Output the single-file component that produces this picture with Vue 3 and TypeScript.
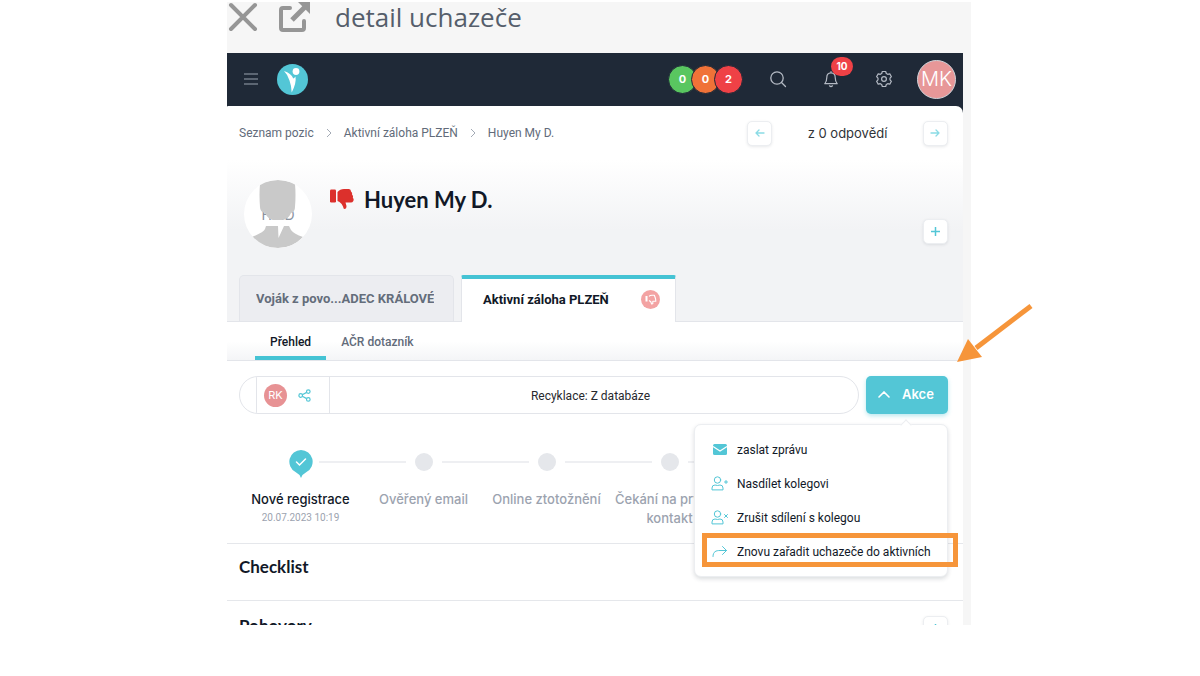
<script setup lang="ts">
interface Counter { value: number; tone: string }
interface Step { label: string; date?: string; done?: boolean }
interface MenuItem { label: string; icon: 'mail' | 'user-plus' | 'user-x' | 'forward'; marked?: boolean }

const counters: Counter[] = [
  { value: 0, tone: 'green' },
  { value: 0, tone: 'orange' },
  { value: 2, tone: 'red' },
]

const crumbs: string[] = ['Seznam pozic', 'Aktivní záloha PLZEŇ', 'Huyen My D.']

const steps: Step[] = [
  { label: 'Nové registrace', date: '20.07.2023 10:19', done: true },
  { label: 'Ověřený email' },
  { label: 'Online ztotožnění' },
  { label: 'Čekání na prvotní kontakt' },
]

const menu: MenuItem[] = [
  { label: 'zaslat zprávu', icon: 'mail' },
  { label: 'Nasdílet kolegovi', icon: 'user-plus' },
  { label: 'Zrušit sdílení s kolegou', icon: 'user-x' },
  { label: 'Znovu zařadit uchazeče do aktivních', icon: 'forward', marked: true },
]
</script>

<template>
  <div class="page">
    <div class="stage">
      <div class="viewer">
        <header class="titlebar">
          <button class="plain" aria-label="Zavřít">
            <svg width="32" height="32" viewBox="0 0 32 32" fill="none" stroke="#969696" stroke-width="4" stroke-linecap="round"><path d="M4 4 28 28M28 4 4 28" /></svg>
          </button>
          <button class="plain" aria-label="Otevřít v novém okně">
            <svg width="34" height="32" viewBox="0 0 34 32" fill="none" stroke="#969696" stroke-width="4"><path d="M13 7H6Q4 7 4 9V27Q4 29 6 29H25Q27 29 27 27V20" stroke-linecap="round" /><path d="M15 19 29 5" stroke-width="5" /><path d="M21 1H33V13Z" fill="#969696" stroke="none" /></svg>
          </button>
          <span class="title">detail uchazeče</span>
        </header>

        <div class="panel">
          <nav class="navbar">
            <button class="plain burger" aria-label="Menu">
              <svg width="14" height="12" viewBox="0 0 14 12" stroke="#9aa3af" stroke-width="1.2"><path d="M0 1H14M0 6H14M0 11H14" /></svg>
            </button>
            <a href="#" class="logo" aria-label="Domů">
              <svg width="31" height="31" viewBox="0 0 31 31"><circle cx="15.500" cy="15.500" r="15.500" fill="#53c6d6" /><circle cx="19" cy="7.500" r="3.400" fill="#fff" /><path d="M7 7Q14 9 16.300 14.500Q17.500 13.800 18.500 12.500Q19.600 19 14.700 28.500Q14.500 22 12.500 16.500Q11 11 7 7Z" fill="#fff" /></svg>
            </a>
            <div class="counters">
              <span v-for="(c, i) in counters" :key="i" class="counter" :class="c.tone">{{ c.value }}</span>
            </div>
            <button class="plain tool" aria-label="Hledat">
              <svg width="18" height="18" viewBox="0 0 18 18" fill="none" stroke="#b4bac4" stroke-width="1.3" stroke-linecap="round"><circle cx="8" cy="8" r="6.200" /><path d="m12.500 12.500 4 4" /></svg>
            </button>
            <button class="plain tool" aria-label="Upozornění">
              <svg width="16" height="18" viewBox="0 0 16 18" fill="none" stroke="#b4bac4" stroke-width="1.2" stroke-linejoin="round" stroke-linecap="round"><path d="M8 1.500V2.800M8 2.800C5 2.800 3.800 5 3.800 7.500C3.800 11 3 12 1.800 13.700H14.200C13 12 12.200 11 12.200 7.500C12.200 5 11 2.800 8 2.800ZM6.500 15.800Q8 17.200 9.500 15.800" /></svg>
              <span class="bubble">10</span>
            </button>
            <button class="plain tool" aria-label="Nastavení">
              <svg width="18" height="18" viewBox="0 0 18 18" fill="none" stroke="#b4bac4" stroke-width="1.200" stroke-linejoin="round"><path d="M7.300 1.500H10.700L11.300 3.500L12.700 4.300L14.800 3.800L16.400 6.700L15 8.200V9.800L16.400 11.300L14.800 14.200L12.700 13.700L11.300 14.500L10.700 16.500H7.300L6.700 14.500L5.300 13.700L3.200 14.200L1.600 11.300L3 9.800V8.200L1.600 6.700L3.200 3.800L5.300 4.300L6.700 3.500Z" /><circle cx="9" cy="9" r="2.400" /></svg>
            </button>
            <button class="plain me">MK</button>
          </nav>

          <main class="content">
            <div class="topline">
              <nav class="crumbs" aria-label="Navigace">
                <template v-for="(c, i) in crumbs" :key="c">
                  <svg v-if="i > 0" width="6" height="10" viewBox="0 0 6 10" fill="none" stroke="#a3aab5"><path d="m1 1 4 4-4 4" /></svg>
                  <a href="#">{{ c }}</a>
                </template>
              </nav>
              <div class="pager">
                <button class="square" aria-label="Předchozí">
                  <svg width="10" height="8" viewBox="0 0 10 8" fill="none" stroke="#8adbe5" stroke-width="1.300" stroke-linecap="round" stroke-linejoin="round"><path d="M9 4H1M4 1 1 4l3 3" /></svg>
                </button>
                <span>z 0 odpovědí</span>
                <button class="square" aria-label="Další">
                  <svg width="10" height="8" viewBox="0 0 10 8" fill="none" stroke="#8adbe5" stroke-width="1.300" stroke-linecap="round" stroke-linejoin="round"><path d="M1 4H9M6 1l3 3-3 3" /></svg>
                </button>
              </div>
            </div>

            <section class="hero">
              <div class="person">
                <div class="portrait">
                  <span>HMD</span>
                  <svg width="68" height="68" viewBox="0 0 68 68" fill="#c9c9c9"><path d="M16 4Q34 -4 51 4Q52 15 51 27Q51 32 47 33Q44 40 38 40H29Q24 39 21 33Q16 32 16 27Q15 14 16 4Z" /><path d="M8 57Q20 52 21 49L22 46H34L34.500 58L40 46H45L47 50Q50 54 59 57Q49 68 34 68Q18 68 8 57Z" /></svg>
                </div>
                <svg class="thumb" width="24" height="22" viewBox="0 0 24 22" fill="#dc302c"><rect x="0" y="1.500" width="6" height="13" rx="1.200" /><path d="M7.500 4Q10 1 14 1H19Q21 1 21 3.500Q22.500 4.500 22 6.500Q23.500 8 22.800 9.500Q24.500 12 23 13.500Q22.500 14.500 21 14.500H15.500L16.500 18Q16.500 21 14.500 21Q13.500 21 13 18.500Q12 15.500 9.500 14L7.500 13Z" /></svg>
                <h1>Huyen My D.</h1>
                <button class="square add" aria-label="Přidat">
                  <svg width="9" height="9" viewBox="0 0 9 9" stroke="#53c6d6" stroke-width="1.500"><path d="M4.500 0V9M0 4.500H9" /></svg>
                </button>
              </div>
              <div class="tabs">
                <a href="#" class="tab"><span class="cut">Voják z povo...ADEC KRÁLOVÉ</span></a>
                <a href="#" class="tab current">
                  <span>Aktivní záloha PLZEŇ</span>
                  <svg width="19" height="19" viewBox="0 0 19 19"><circle cx="9.500" cy="9.500" r="9.500" fill="#f3a3a3" /><rect x="4.500" y="6" width="2" height="5.500" fill="#fff" /><path d="M8 6.300Q9 5.200 11 5.200H13.300L14 7L14.600 9L14.800 11.300H11.800L11.800 13.800L10.600 14L9.800 11.800L8 10.500" fill="none" stroke="#fff" stroke-width="1.100" stroke-linejoin="round" /></svg>
                </a>
              </div>
            </section>

            <nav class="subtabs">
              <a href="#" class="active">Přehled</a>
              <a href="#">AČR dotazník</a>
            </nav>

            <section class="progress">
              <div class="actions">
                <div class="pill">
                  <span class="cap"></span>
                  <span class="share">
                    <span class="rk">RK</span>
                    <svg width="13" height="13" viewBox="0 0 13 13" fill="none" stroke="#53c6d6" stroke-width="1.200"><circle cx="2.700" cy="6.500" r="1.800" /><circle cx="10.300" cy="2.600" r="1.800" /><circle cx="10.300" cy="10.400" r="1.800" /><path d="M4.300 5.700 8.700 3.400M4.300 7.300 8.700 9.600" /></svg>
                  </span>
                  <span class="source">Recyklace: Z databáze</span>
                </div>
                <div class="dropdown">
                  <button class="akce" aria-expanded="true">
                    <svg width="12" height="7" viewBox="0 0 12 7" fill="none" stroke="#fff" stroke-width="1.600" stroke-linecap="round"><path d="M1 6 6 1l5 5" /></svg>
                    Akce
                  </button>
                  <div class="menu">
                    <button v-for="m in menu" :key="m.label" class="item" :class="{ marked: m.marked }">
                      <svg v-if="m.icon === 'mail'" width="18" height="16" viewBox="0 0 18 16"><rect x="2" y="3" width="14" height="11" rx="1.500" fill="#53c6d6" /><path d="M2 5.500 9 10l7-4.500" fill="none" stroke="#fff" stroke-width="1.200" /></svg>
                      <svg v-else-if="m.icon === 'forward'" width="18" height="16" viewBox="0 0 18 16" fill="none" stroke="#53c6d6" stroke-linecap="round" stroke-linejoin="round"><path d="M2 13.500C2 8.500 5 7.500 9 7.500H15.500M11.500 3.500l4 4-4 4" /></svg>
                      <svg v-else width="18" height="16" viewBox="0 0 18 16" fill="none" stroke="#53c6d6" stroke-linecap="round"><circle cx="6.500" cy="5" r="3.200" /><path d="M1 14.500V13Q1 10 4 10Q6.500 11 9 10Q12 10 12 13V14.500Z" stroke-linejoin="round" /><path v-if="m.icon === 'user-plus'" d="M15 5.500v3M13.500 7h3" /><path v-else d="m13.500 5.500 3 3M16.500 5.500l-3 3" /></svg>
                      <span>{{ m.label }}</span>
                    </button>
                  </div>
                </div>
              </div>

              <ol class="steps">
                <li v-for="s in steps" :key="s.label" :class="{ done: s.done }">
                  <div class="track">
                    <svg v-if="s.done" width="24" height="28" viewBox="0 0 24 28"><path d="M12 0A11.700 11.700 0 0 1 17.500 22Q13.500 24 12 28Q10.500 24 6.500 22A11.700 11.700 0 0 1 12 0Z" fill="#53c6d6" /><path d="m7.500 12 3 3 6-6" fill="none" stroke="#fff" stroke-width="1.500" stroke-linecap="round" /></svg>
                    <i v-else class="dot"></i>
                    <i class="line"></i>
                  </div>
                  <span class="label">{{ s.label }}</span>
                  <time v-if="s.date">{{ s.date }}</time>
                </li>
              </ol>
            </section>

            <section class="block"><h2>Checklist</h2></section>
            <section class="block last">
              <h2>Pohovory</h2>
              <button class="square" aria-label="Přidat pohovor">
                <svg width="9" height="9" viewBox="0 0 9 9" stroke="#53c6d6" stroke-width="1.500"><path d="M4.500 0V9M0 4.500H9" /></svg>
              </button>
            </section>
          </main>
        </div>
      </div>

      <svg class="pointer" width="78" height="62" viewBox="0 0 78 62"><path d="M75 5 20 47" stroke="#f6953a" stroke-width="5" /><path d="M1 61 12 38 26 56Z" fill="#f6953a" /></svg>
    </div>
  </div>
</template>

<style>
body {
  margin: 0;
  background: #fff;
}
</style>

<style scoped>
* {
  box-sizing: border-box;
}
.page {
  display: grid;
  grid-template-columns: 227fr 744fr 229fr;
  height: 100vh;
  padding: 2px 0 51px;
  overflow: hidden;
  font-family: Inter, "Liberation Sans", sans-serif;
  font-size: 12px;
  color: #111827;
}
.stage {
  grid-column: 2;
  position: relative;
  min-width: 0;
  min-height: 0;
}
.viewer {
  height: 100%;
  overflow: hidden;
  background: #f6f6f6;
}
a {
  color: inherit;
  text-decoration: none;
}
button {
  font: inherit;
  color: inherit;
  cursor: pointer;
}
svg {
  display: block;
  flex: none;
}
.plain {
  padding: 0;
  border: 0;
  background: none;
}
.titlebar {
  display: flex;
  align-items: center;
  height: 51px;
  padding-bottom: 21px;
}
.titlebar .plain + .plain {
  margin-left: 18px;
}
.title {
  margin-left: 24px;
  font-family: "Open Sans", sans-serif;
  font-size: 26px;
  line-height: 32px;
  color: #555e6b;
}
.panel {
  margin-right: 8px;
  background: #1f2937;
}
.navbar {
  display: flex;
  align-items: center;
  height: 53px;
  padding: 0 7px 1px 17px;
}
.logo {
  margin-left: 19px;
}
.counters {
  display: flex;
  margin-left: auto;
  margin-right: 8px;
}
.counter {
  display: grid;
  place-items: center;
  width: 29px;
  height: 29px;
  border: 1px solid #1f2937;
  border-radius: 50%;
  font-size: 11px;
  font-weight: 700;
  color: #fff;
}
.counter + .counter {
  margin-left: -6px;
}
.green { background: #59c660; }
.orange { background: #f07238; }
.red { background: #ef4146; }
.tool {
  position: relative;
  display: grid;
  place-items: center;
  width: 53px;
  height: 52px;
}
.bubble {
  position: absolute;
  top: 4px;
  left: 27px;
  width: 22px;
  border-radius: 10px;
  background: #ef4146;
  font-size: 10px;
  font-weight: 700;
  line-height: 19px;
  color: #fff;
}
.me {
  width: 39px;
  height: 39px;
  margin-left: 7px;
  border: 1px solid #cfd3d9;
  border-radius: 50%;
  background: #e79798;
  font-size: 20px;
  font-weight: 300;
  color: #fff;
}
.content {
  border-radius: 1px 7px 0 0;
  background: #fff;
}
.topline {
  display: flex;
  align-items: center;
  justify-content: space-between;
  height: 54px;
  padding: 0 15px 0 12px;
}
.crumbs {
  display: flex;
  align-items: center;
  gap: 12px;
  font-family: Roboto, sans-serif;
  color: #626b7a;
}
.pager {
  display: flex;
  align-items: center;
  justify-content: space-between;
  width: 201px;
  font-size: 13px;
  color: #303338;
}
.square {
  display: grid;
  place-items: center;
  width: 25px;
  height: 25px;
  padding: 0;
  border: 1px solid #eceef1;
  border-radius: 5px;
  background: #fff;
  box-shadow: 0 1px 3px rgba(31, 41, 55, 0.1);
}
.hero {
  background: linear-gradient(#fff, #f2f3f5 70px);
  border-bottom: 1px solid #e3e5ea;
}
.person {
  display: flex;
  align-items: flex-start;
  height: 115px;
  padding: 20px 15px 0 17px;
}
.portrait {
  display: grid;
  place-items: center;
  width: 68px;
  height: 68px;
  border-radius: 50%;
  background: #fff;
  overflow: hidden;
  font-size: 14px;
  color: #8a92a0;
}
.portrait > * {
  grid-area: 1 / 1;
}
.thumb {
  margin: 8px 0 0 18px;
}
h1 {
  margin: 4px 0 0 10px;
  font-family: Lato, sans-serif;
  font-size: 22px;
  font-weight: 700;
  line-height: 32px;
}
.add {
  margin: 39px 0 0 auto;
}
.tabs {
  display: flex;
  gap: 7px;
  padding-left: 12px;
  font-family: Roboto, sans-serif;
  font-size: 13px;
  font-weight: 700;
}
.tab {
  display: flex;
  align-items: center;
  width: 215px;
  height: 46px;
  padding: 0 16px;
  border: 1px solid #e3e5ea;
  border-bottom: 0;
  border-radius: 5px 5px 0 0;
  background: #ecedf1;
  color: #646d7b;
}
.cut {
  overflow: hidden;
  white-space: nowrap;
}
.tab.current {
  justify-content: space-between;
  height: 47px;
  margin-bottom: -1px;
  padding: 0 15px 2px 21px;
  border-top: 4px solid #45c3d4;
  border-radius: 2px 2px 0 0;
  background: #fff;
  color: #111827;
}
.subtabs {
  display: flex;
  height: 39px;
  padding-left: 28px;
  border-bottom: 1px solid #e3e5ea;
  background: linear-gradient(#fff 50%, #f4f5f7);
  font-family: Roboto, sans-serif;
  font-weight: 500;
  line-height: 40px;
  color: #626b7a;
}
.subtabs a {
  padding: 0 15px;
}
.subtabs .active {
  height: 38px;
  border-bottom: 4px solid #45c3d4;
  color: #111827;
}
.progress {
  height: 183px;
  padding: 15px 15px 0 12px;
  border-bottom: 1px solid #e5e7eb;
}
.actions {
  display: flex;
  gap: 7px;
}
.pill {
  display: flex;
  flex: 1;
  height: 38px;
  border: 1px solid #e3e5ea;
  border-radius: 19px;
  overflow: hidden;
}
.cap {
  width: 17px;
  border-right: 1px solid #e3e5ea;
}
.share {
  display: flex;
  align-items: center;
  gap: 11px;
  width: 73px;
  padding-left: 7px;
  border-right: 1px solid #e3e5ea;
}
.rk {
  width: 23px;
  border-radius: 50%;
  background: #e79294;
  font-size: 11px;
  line-height: 23px;
  text-align: center;
  color: #fff;
}
.source {
  flex: 1;
  padding-right: 7px;
  font-family: Roboto, sans-serif;
  line-height: 38px;
  text-align: center;
  color: #27292e;
}
.dropdown {
  position: relative;
}
.akce {
  display: flex;
  align-items: center;
  gap: 12px;
  width: 82px;
  height: 38px;
  padding: 0 0 2px 12px;
  border: 0;
  border-radius: 5px;
  background: #53c6d6;
  box-shadow: 0 2px 4px rgba(83, 198, 214, 0.4);
  font-size: 13px;
  font-weight: 600;
  color: #fff;
}
.menu {
  position: absolute;
  z-index: 1;
  top: 48px;
  right: 0;
  width: 254px;
  padding: 7px 0 8px;
  border: 1px solid #eceef1;
  border-radius: 7px;
  background: #fff;
  box-shadow: 0 2px 4px rgba(31, 41, 55, 0.16);
}
.menu::before {
  content: "";
  position: absolute;
  top: -4px;
  right: 37px;
  width: 7px;
  height: 7px;
  border: 1px solid #eceef1;
  border-right: 0;
  border-bottom: 0;
  background: #fff;
  transform: rotate(45deg);
}
.item {
  position: relative;
  display: flex;
  align-items: center;
  gap: 8px;
  width: 100%;
  height: 34px;
  padding: 0 0 0 16px;
  border: 0;
  background: none;
  font-family: Roboto, sans-serif;
  white-space: nowrap;
}
.item span {
  padding-top: 2px;
}
.marked::after {
  content: "";
  position: absolute;
  inset: -1px -11px 1px 7px;
  border: 5px solid #f6953a;
}
.steps {
  display: flex;
  margin: 32px 0 0;
  padding: 0;
  list-style: none;
  overflow: hidden;
}
.steps li {
  display: flex;
  flex-direction: column;
  align-items: center;
  flex: 0 0 123px;
  font-size: 13px;
  font-weight: 500;
  line-height: 19px;
  text-align: center;
  color: #9ca3af;
}
.track {
  position: relative;
  display: flex;
  justify-content: center;
  width: 100%;
  height: 44px;
  padding-top: 4px;
}
.dot {
  width: 18px;
  height: 18px;
  margin-top: 3px;
  border-radius: 50%;
  background: #e5e7eb;
}
.line {
  position: absolute;
  top: 15px;
  left: 80px;
  width: 87px;
  height: 2px;
  background: #eeeff2;
}
.steps .done {
  color: #111827;
}
time {
  font-family: Roboto, sans-serif;
  font-size: 10px;
  font-weight: 400;
  line-height: 18px;
  color: #9ca3af;
}
h2 {
  margin: 0;
  font-family: Lato, sans-serif;
  font-size: 17px;
  font-weight: 700;
  line-height: 24px;
}
.block {
  height: 57px;
  padding: 11px 15px 0 12px;
  border-bottom: 1px solid #e5e7eb;
}
.block.last {
  display: flex;
  align-items: flex-start;
  justify-content: space-between;
}
.last .square {
  margin-top: 4px;
}
.last h2 {
  margin-top: 2px;
}
.pointer {
  position: absolute;
  top: 299px;
  right: -63px;
}
</style>
